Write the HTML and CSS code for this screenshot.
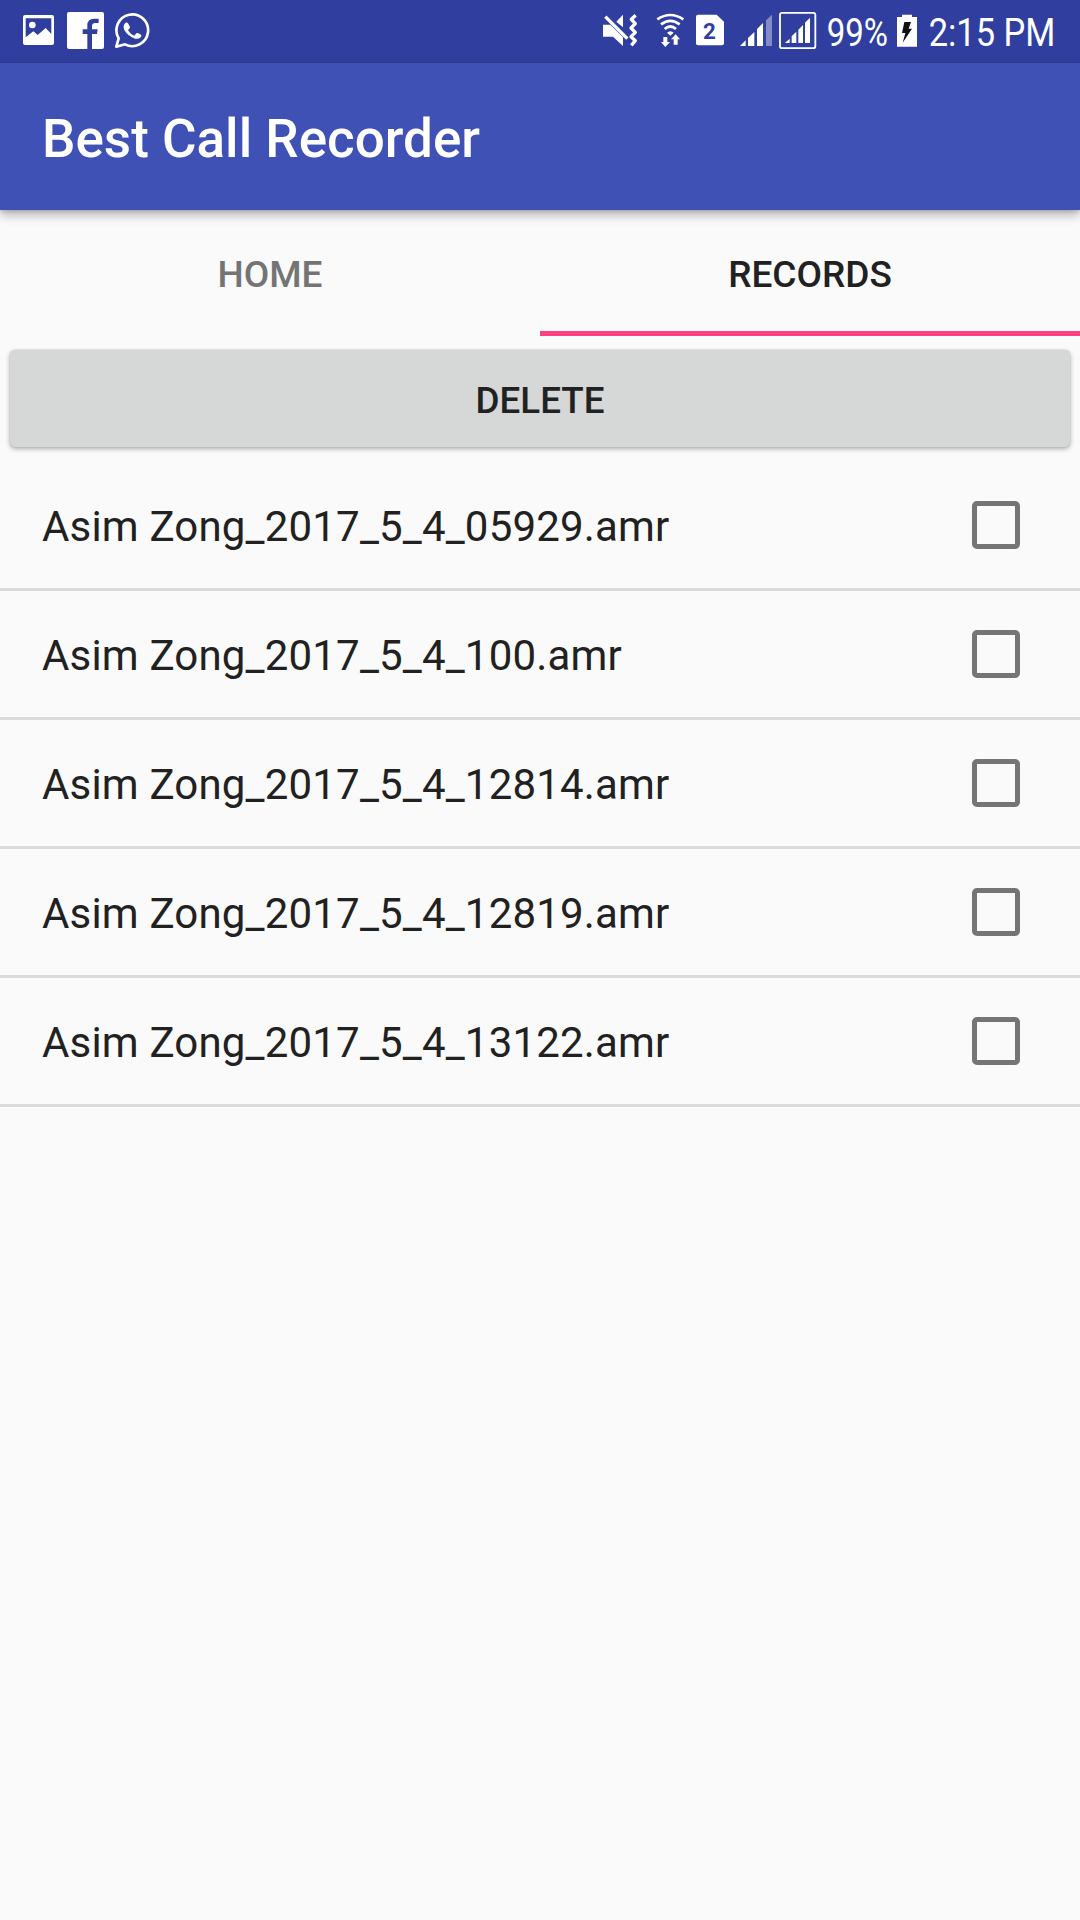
FILE: index.html
```html
<!DOCTYPE html>
<html lang="en">
<head>
<meta charset="utf-8">
<title>Best Call Recorder</title>
<link rel="stylesheet" href="styles.css">
</head>
<body>
<div class="status-bar">
  <div class="notifications">
    <svg class="icon-image" viewBox="66 0 99 189"><path fill-rule="evenodd" d="M75 45H156Q162 45 162 51V129Q162 135 156 135H75Q69 135 69 129V51Q69 45 75 45ZM77 55V112L100 94L113 105L137 84L154 102V55Z"/><circle cx="97" cy="75" r="10"/></svg>
    <svg class="icon-facebook" viewBox="198 0 117 189"><path d="M207 36H306Q312 36 312 42V141Q312 147 306 147H276V102H291L293 88H276V79Q276 69 286 69H296V56H282Q262 56 262 76V88H248V102H262V147H207Q201 147 201 141V42Q201 36 207 36Z"/></svg>
    <svg class="icon-whatsapp" viewBox="342 0 111 189"><path class="line" d="M349 140L356 115A47.500 47.500 0 1 1 375 133Z"/><path d="M375 70Q380 65 384 70L390 81Q391 84 384 91Q391 103 403 107L409 100Q411 98 415 100L423 104Q426 106 422 112Q416 118 406 116Q384 109 373 90Q368 79 375 70Z"/></svg>
  </div>
  <div class="indicators">
    <svg class="icon-mute" viewBox="36 0 108 189"><path d="M39 74H61L99 112V138L69 110H39ZM99 44V82L79 65Z"/><path class="slash" d="M46 50L112 116"/><path class="wave" d="M137 46L124 58L136 71L123 84L136 97L123 110L136 122L124 136"/></svg>
    <svg class="icon-wifi" viewBox="198 0 87 189"><path class="arc" d="M202 58Q241 32 280 58M213 73Q241 52 269 73M224 87Q241 72 258 87"/><path d="M231 98Q241 89 251 98L241 107ZM220 111H232V126H240L226 141L213 126H220ZM251 134V118H243L257 103L270 118H263V134Z"/></svg>
    <svg class="icon-sim" viewBox="315 0 90 189"><path d="M324 44H380L402 65V130Q402 136 396 136H324Q318 136 318 130V50Q318 44 324 44Z"/><text class="sim-number" x="358.500" y="116" text-anchor="middle">2</text></svg>
    <svg class="icon-signal" viewBox="447 0 102 189"><path d="M450 138L467 121V138ZM474 138V114L493 96V138ZM501 138V87L519 69V138Z"/><path class="faint" d="M528 138V61L546 44V138Z"/></svg>
    <svg class="icon-signal-box" viewBox="564 0 117 189"><rect class="frame" x="570" y="38.500" width="106" height="106" rx="6"/><path d="M585 129L599 116V129ZM605 129V109L619 95V129ZM625 129V89L639 75V129ZM645 129V68L660 53V129Z"/></svg>
    <svg class="battery-level" viewBox="15 0 198 189"><text x="20" y="138" textLength="184" lengthAdjust="spacingAndGlyphs">99%</text></svg>
    <svg class="icon-battery" viewBox="228 0 66 189"><path d="M231 51H246V44H276V51H291V140H231Z"/><path class="bolt" d="M253 66H273L266 86H276L248 128L256 99H246Z"/></svg>
    <svg class="clock" viewBox="318 0 393 189"><text x="326" y="138" textLength="380" lengthAdjust="spacingAndGlyphs">2:15 PM</text></svg>
  </div>
</div>
<header class="app-bar"><h1>Best Call Recorder</h1></header>
<nav class="tabs">
  <div class="tab">HOME</div>
  <div class="tab active">RECORDS</div>
</nav>
<main>
  <div class="actions"><button class="delete">DELETE</button></div>
  <ul class="records">
    <li><span>Asim Zong_2017_5_4_05929.amr</span><i class="checkbox"></i></li>
    <li><span>Asim Zong_2017_5_4_100.amr</span><i class="checkbox"></i></li>
    <li><span>Asim Zong_2017_5_4_12814.amr</span><i class="checkbox"></i></li>
    <li><span>Asim Zong_2017_5_4_12819.amr</span><i class="checkbox"></i></li>
    <li><span>Asim Zong_2017_5_4_13122.amr</span><i class="checkbox"></i></li>
  </ul>
</main>
</body>
</html>
```
FILE: styles.css
```css
* { box-sizing: border-box; }
body {
  margin: 0;
  width: 1080px;
  height: 1920px;
  overflow: hidden;
  background: #fafafa;
  color: #212121;
  font-family: Roboto, sans-serif;
}
.status-bar {
  height: 63px;
  padding: 0 23px 0 22px;
  display: flex;
  justify-content: space-between;
  background: #303f9f;
}
.notifications, .indicators { display: flex; }
.status-bar svg { display: block; height: 63px; fill: #fff; }
.status-bar text { font-size: 118px; }
.icon-image { width: 33px; }
.icon-facebook { width: 39px; margin-left: 11px; }
.icon-whatsapp { width: 37px; margin-left: 9px; }
.icon-whatsapp .line { fill: none; stroke: #fff; stroke-width: 8; stroke-linejoin: round; }
.icon-mute { width: 36px; }
.icon-mute .slash { stroke: #fff; stroke-width: 10; }
.icon-mute .wave { fill: none; stroke: #fff; stroke-width: 10; stroke-linejoin: round; }
.icon-wifi { width: 29px; margin-left: 18px; }
.icon-wifi .arc { fill: none; stroke: #fff; stroke-width: 8; }
.icon-sim { width: 30px; margin-left: 10px; }
.status-bar .sim-number { font-size: 67px; font-weight: 700; fill: #303f9f; }
.icon-signal { width: 34px; margin-left: 14px; }
.icon-signal .faint { opacity: .4; }
.icon-signal-box { width: 39px; margin-left: 5px; }
.icon-signal-box .frame { fill: none; stroke: #fff; stroke-width: 5.5; }
.battery-level { width: 66px; margin-left: 8px; }
.icon-battery { width: 22px; margin-left: 5px; }
.icon-battery .bolt { fill: #111; }
.clock { width: 131px; margin-left: 8px; }
.app-bar {
  height: 147px;
  padding: 5px 42px 0;
  display: flex;
  align-items: center;
  background: #3f51b5;
  box-shadow: 0 5px 10px rgba(0, 0, 0, .28), 0 1px 4px rgba(0, 0, 0, .15);
}
h1 { margin: 0; color: #fff; font-size: 53px; font-weight: 500; line-height: 62px; }
.tabs { height: 126px; display: flex; }
.tab {
  flex: 1;
  display: flex;
  align-items: center;
  justify-content: center;
  padding-top: 7px;
  border-bottom: 5px solid transparent;
  color: #747474;
  font-size: 37px;
  font-weight: 500;
}
.tab.active { color: #212121; border-color: #ff4081; }
.actions { height: 126px; padding: 14px 10px 15px; display: flex; }
.delete {
  flex: 1;
  padding: 4px 0 0;
  border: 0;
  border-radius: 5px;
  background: #d6d7d7;
  color: #212121;
  font: 500 36.75px Roboto, sans-serif;
  box-shadow: 0 2px 5px rgba(0, 0, 0, .3), 0 0 2px rgba(0, 0, 0, .15);
}
.records { list-style: none; margin: 0; padding: 0; }
.records li {
  height: 129px;
  padding: 0 60px 0 42px;
  display: flex;
  align-items: center;
  justify-content: space-between;
  border-bottom: 3px solid #dbdbdb;
  font-size: 42px;
  letter-spacing: .18px;
}
.records span { padding-top: 3px; }
.checkbox { width: 48px; height: 48px; border: 5px solid #757575; border-radius: 5px; }
```
